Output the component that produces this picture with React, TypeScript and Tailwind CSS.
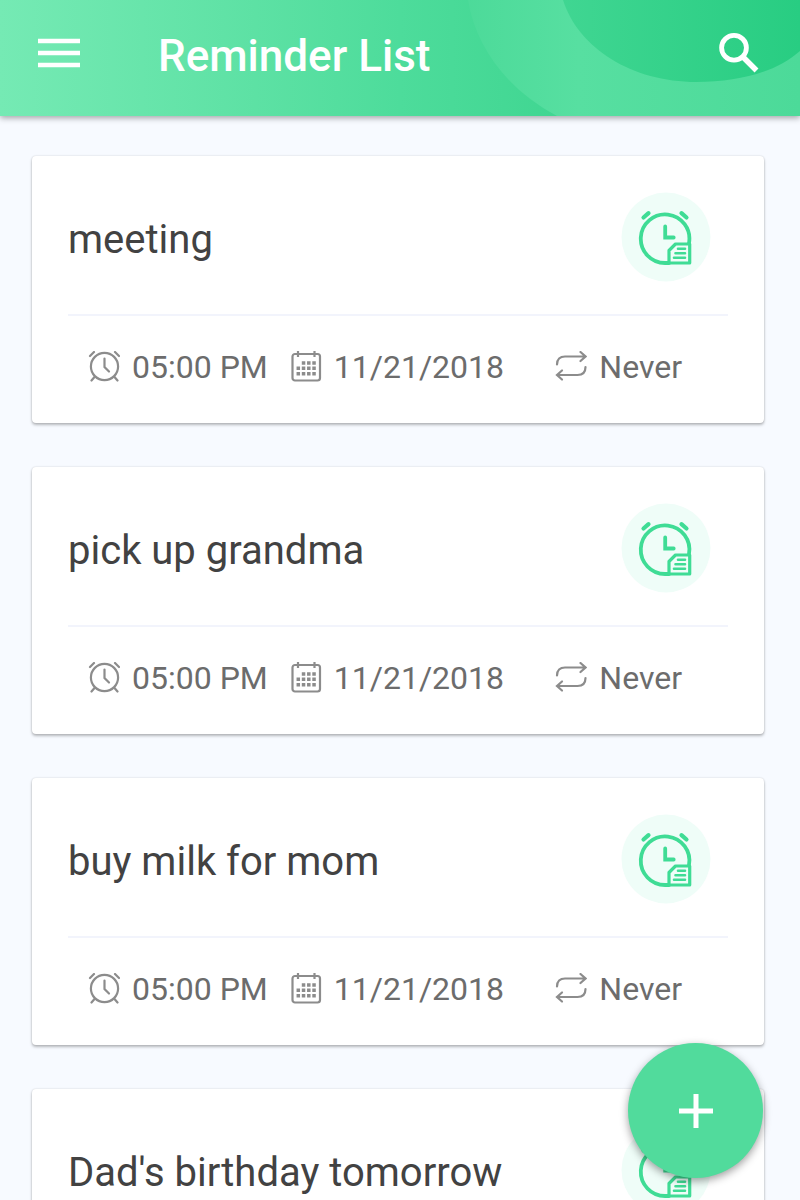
import React from 'react';

interface Reminder {
  title: string;
  time: string;
  date: string;
  repeat: string;
}

const reminders: Reminder[] = [
  { title: 'meeting', time: '05:00 PM', date: '11/21/2018', repeat: 'Never' },
  { title: 'pick up grandma', time: '05:00 PM', date: '11/21/2018', repeat: 'Never' },
  { title: 'buy milk for mom', time: '05:00 PM', date: '11/21/2018', repeat: 'Never' },
  { title: "Dad's birthday tomorrow", time: '05:00 PM', date: '11/21/2018', repeat: 'Never' }
];

const AlarmIcon = () => (
  <svg className="w-8 h-8 shrink-0" viewBox="0 0 32 32" fill="none" stroke="#8c8c8c" strokeWidth="2.200" strokeLinecap="round" aria-hidden="true">
    <circle cx="16.500" cy="15.500" r="13.600" />
    <path d="M16.500 7.500v8.500l4.500 4.500" />
    <path d="M2 5l4-4M31 5l-4-4M6.500 26l-3 3.500M26.500 26l3 3.500" />
  </svg>
);

const CalendarIcon = () => (
  <svg className="w-8 h-8 shrink-0" viewBox="0 0 32 32" fill="none" stroke="#8c8c8c" strokeWidth="2.200" aria-hidden="true">
    <rect x="2.500" y="3" width="27.500" height="26.500" rx="2.500" />
    <path d="M8 0v6M24.500 0v6" />
    <path d="M11.800 12h14" strokeWidth="3.400" strokeDasharray="3.500 1.750" />
    <path d="M6.550 17.300h19.250" strokeWidth="3.400" strokeDasharray="3.500 1.750" />
    <path d="M6.550 22.700h19.250" strokeWidth="3.400" strokeDasharray="3.500 1.750" />
  </svg>
);

const RepeatIcon = () => (
  <svg className="w-8 h-8 shrink-0" viewBox="0 0 32 32" fill="none" stroke="#8c8c8c" strokeWidth="2.200" strokeLinecap="round" aria-hidden="true">
    <path d="M2 13.500c0-5 3-8 8-8h20M25.500 1l5 4.500-5 4.500" />
    <path d="M30.500 16c0 5-3 8-8 8H2.500M7 19.500l-5 4.500 5 4.500" />
  </svg>
);

const ReminderBadge = () => (
  <svg className="w-[90px] h-[90px] shrink-0 mr-[17px]" viewBox="0 0 90 90" fill="none" stroke="#3fdc95" strokeWidth="3.800" strokeLinecap="round" aria-hidden="true">
    <circle cx="45" cy="45" r="44.500" fill="#effdf8" stroke="none" />
    <path d="M68 51A24.300 24.300 0 1 0 44.200 71H48" />
    <path d="M44.200 34.500V45.500h8.500" />
    <path d="M22.500 25.500l5-4.300M65.500 25.500l-5-4.300" strokeWidth="4.200" />
    <path d="M48 71V58.500l6.500-6.500h14.200v19z" fill="#effdf8" strokeWidth="3.200" strokeLinejoin="round" />
    <path d="M57 56.800h7M54.500 61.300h9.500M53 65.800h11" strokeWidth="2.600" />
  </svg>
);

const ReminderCard: React.FC<Reminder> = ({ title, time, date, repeat }) => (
  <li className="shrink-0 bg-white rounded px-9 shadow-[0_2px_3px_rgba(0,0,0,0.26),0_0_2px_rgba(0,0,0,0.16)]">
    <div className="flex items-center justify-between h-40 pt-1 border-b-2 border-[#f2f4fc]">
      <h2 className="pt-1.5 text-[40px] leading-[48px] text-[#424242]">{title}</h2>
      <ReminderBadge />
    </div>
    <div className="flex items-center h-[107px] pb-1.5 px-5 text-[32px] leading-[40px] text-[#6c6c6c]">
      <div className="flex items-center gap-3">
        <AlarmIcon />
        <span>{time}</span>
      </div>
      <div className="flex items-center gap-3 ml-[22px]">
        <CalendarIcon />
        <span>{date}</span>
      </div>
      <div className="flex items-center gap-3 ml-auto mr-[26px]">
        <RepeatIcon />
        <span>{repeat}</span>
      </div>
    </div>
  </li>
);

export default function App() {
  return (
    <div className="relative flex flex-col h-screen overflow-hidden bg-[#f7faff] font-['Roboto',sans-serif]">
      <header className="relative z-10 flex items-center h-[116px] shrink-0 px-9 pb-2 text-white bg-linear-to-r from-[#75eab4] via-[#4ddc9b] to-[#28cd84] shadow-[0_2px_6px_rgba(0,0,0,0.35)]">
        {/* decorative rings behind the search button */}
        <svg className="absolute right-0 top-0 w-[340px] h-[116px]" viewBox="0 0 340 116" aria-hidden="true">
          <defs>
            <linearGradient id="ring" gradientUnits="userSpaceOnUse" x1="0" y1="0" x2="340" y2="0">
              <stop offset="0" stopColor="#4cda99" />
              <stop offset="0.350" stopColor="#57dfa1" />
              <stop offset="1" stopColor="#4cda99" />
            </linearGradient>
            <linearGradient id="core" gradientUnits="userSpaceOnUse" x1="100" y1="0" x2="340" y2="0">
              <stop offset="0" stopColor="#40d692" />
              <stop offset="1" stopColor="#28cd82" />
            </linearGradient>
          </defs>
          <path d="M8 0C16 48 48 90 97 116H340V0z" fill="url(#ring)" />
          <path d="M103 0C118 48 172 82 236 82C280 82 316 72 340 51V0z" fill="url(#core)" />
        </svg>
        <button type="button" aria-label="Open menu" className="relative">
          <svg className="w-12 h-12" viewBox="0 0 48 48" stroke="currentColor" strokeWidth="4.600" aria-hidden="true">
            <path d="M2 11h42M2 23h42M2 35h42" />
          </svg>
        </button>
        <h1 className="relative ml-[74px] pt-1 text-[44px] leading-[52px] font-medium">Reminder List</h1>
        <button type="button" aria-label="Search" className="relative ml-auto">
          <svg className="w-12 h-12" viewBox="0 0 48 48" fill="none" stroke="currentColor" strokeWidth="4.800" aria-hidden="true">
            <circle cx="18" cy="17.700" r="12.400" />
            <path d="M26.500 26.500l14 14" strokeWidth="5.500" />
          </svg>
        </button>
      </header>

      <main className="flex-1 min-h-0 overflow-y-auto [scrollbar-width:none]">
        <ul className="flex flex-col gap-11 pl-8 pr-9 py-10">
          {reminders.map((reminder) => (
            <ReminderCard key={reminder.title} {...reminder} />
          ))}
        </ul>
      </main>

      <button
        type="button"
        aria-label="Add reminder"
        className="absolute right-[37px] bottom-[22px] z-20 flex items-center justify-center w-[135px] h-[135px] rounded-full bg-[#51db9c] text-white shadow-[0_3px_8px_rgba(0,0,0,0.38)]"
      >
        <svg className="w-9 h-9" viewBox="0 0 36 36" stroke="currentColor" strokeWidth="5" aria-hidden="true">
          <path d="M18 1v34M1 18h34" />
        </svg>
      </button>
    </div>
  );
}
